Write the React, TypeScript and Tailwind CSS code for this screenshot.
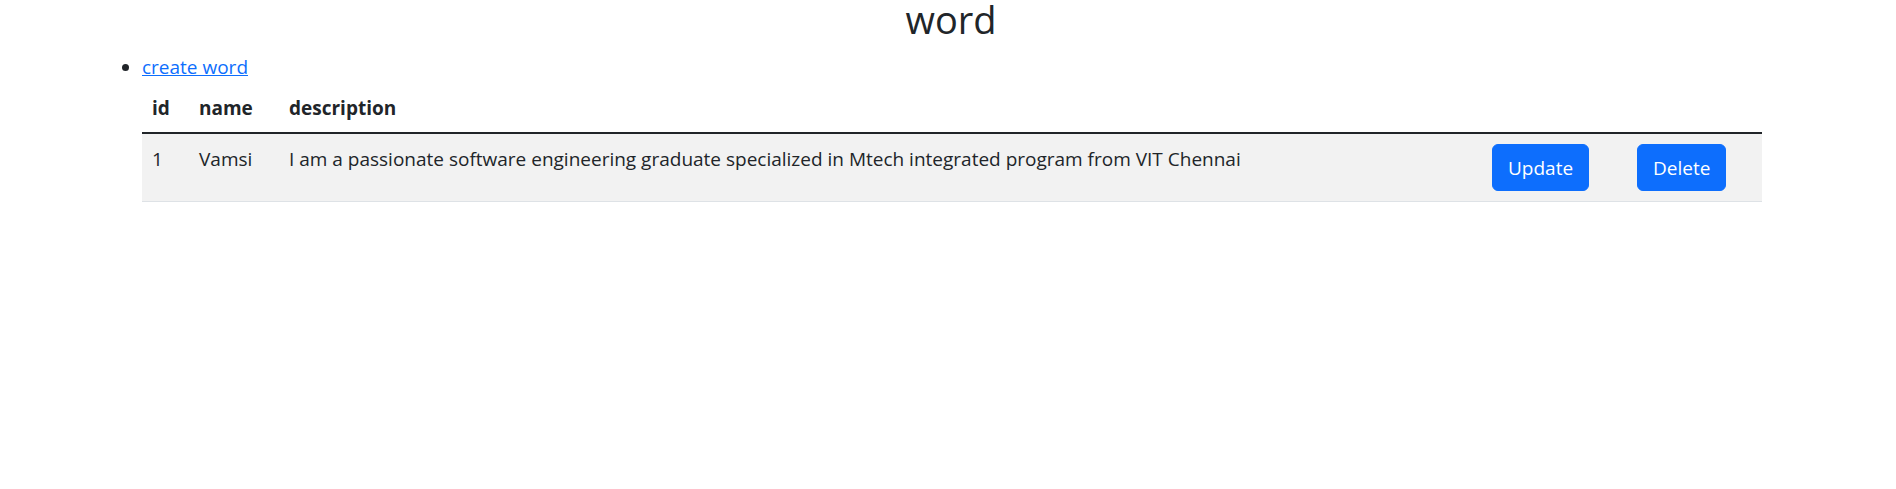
const rows = [
	{
		id: 1,
		name: 'Vamsi',
		description:
			'I am a passionate software engineering graduate specialized in Mtech integrated program from VIT Chennai',
	},
]

function Btn({ label }: { label: string }) {
	return (
		<button
			type="button"
			className="rounded-[6px] border border-[#0d6efd] bg-[#0d6efd] px-[15px] py-[7.5px] text-[19px] leading-[30px] text-white"
		>
			{label}
		</button>
	)
}

export default function App() {
	return (
		<div
			className="min-h-[489px] bg-white text-[19px] leading-[30px] text-[#212529]"
			style={{ fontFamily: '"Open Sans", "Noto Sans", sans-serif' }}
		>
			<h1 className="mb-[14px] pl-[6px] text-center text-[38px] leading-[38px] font-normal">
				word
			</h1>
			<ul className="ml-[102px] w-[1660px] list-disc pl-[40px]">
				<li>
					<a href="#" className="text-[#0d6efd] underline">
						create word
					</a>
					<table className="w-[1620px] table-fixed border-collapse text-left">
						<colgroup>
							<col className="w-[47px]" />
							<col className="w-[90px]" />
							<col className="w-[1203px]" />
							<col className="w-[145px]" />
							<col className="w-[135px]" />
						</colgroup>
						<thead>
							<tr className="border-b-2 border-[#212529]">
								<th className="px-[10px] pt-[11px] pb-[9px] font-bold">id</th>
								<th className="px-[10px] pt-[11px] pb-[9px] font-bold">name</th>
								<th className="px-[10px] pt-[11px] pb-[9px] font-bold">description</th>
								<th className="px-[10px] pt-[11px] pb-[9px]"></th>
								<th className="px-[10px] pt-[11px] pb-[9px]"></th>
							</tr>
						</thead>
						<tbody>
							{rows.map((r) => (
								<tr key={r.id} className="border-b border-[#dee2e6] bg-[#f2f2f2]">
									<td className="px-[10px] py-[10px] align-top">{r.id}</td>
									<td className="px-[10px] py-[10px] align-top">{r.name}</td>
									<td className="px-[10px] py-[10px] align-top">{r.description}</td>
									<td className="px-[10px] py-[10px] align-top">
										<Btn label="Update" />
									</td>
									<td className="px-[10px] py-[10px] align-top">
										<Btn label="Delete" />
									</td>
								</tr>
							))}
						</tbody>
					</table>
				</li>
			</ul>
		</div>
	)
}
